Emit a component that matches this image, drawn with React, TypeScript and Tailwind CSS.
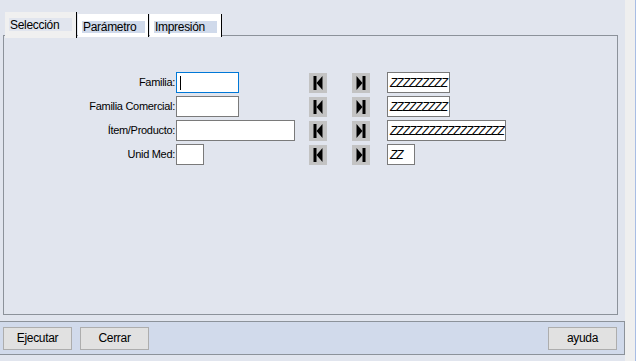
import React from "react";

const font = { fontFamily: '"Liberation Sans", Arial, sans-serif' };

function NavBtn({ dir }: { dir: "first" | "last" }) {
  return (
    <div className="w-[18px] h-[20px] bg-[#c3c3c3] flex items-center justify-center">
      <svg width="10" height="14" viewBox="0 0 10 14">
        {dir === "first" ? (
          <>
            <rect x="0.5" y="0" width="3" height="14" fill="#000" />
            <polygon points="9.5,0 3.5,7 9.5,14" fill="#000" />
          </>
        ) : (
          <>
            <rect x="6.5" y="0" width="3" height="14" fill="#000" />
            <polygon points="0.5,0 6.5,7 0.5,14" fill="#000" />
          </>
        )}
      </svg>
    </div>
  );
}

function Hatch({ width, count }: { width: number; count: number }) {
  return (
    <div
      className="h-[21px] border border-[#7a7a7a] bg-white flex items-center pl-[2px] overflow-hidden"
      style={{ width }}
    >
      <span className="text-[12px] italic leading-none text-black tracking-[-1px] whitespace-nowrap">
        {"Z".repeat(count)}
      </span>
    </div>
  );
}

const rows = [
  { label: "Familia:", w: 63, box: 63, z: 9, focus: true },
  { label: "Familia Comercial:", w: 63, box: 63, z: 9 },
  { label: "Ítem/Producto:", w: 119, box: 119, z: 18 },
  { label: "Unid Med:", w: 28, box: 28, z: 2 },
];

export default function App() {
  return (
    <div className="w-[636px] h-[361px] bg-[#e1e5ee] flex text-[11px] tracking-[-0.3px] text-black overflow-hidden" style={font}>
      <div className="w-[625px] flex flex-col">
        <div className="pt-[12px] pl-[5px] flex items-start h-[38px] relative z-10">
          <div className="w-[72px] h-[26px] bg-[#f0f0f0] border-r border-black pl-[4px] pt-[6px]">
            <div className="w-[63px] h-[13px] bg-[#e1e5ee] flex items-center pl-[1px] leading-none text-[12px]">Selección</div>
          </div>
          <div className="ml-[1px] mt-[2px] w-[71px] h-[23px] bg-white border-r border-black pl-[4px] pt-[7px]">
            <div className="w-[63px] h-[12px] bg-[#d0daeb] flex items-center pl-[1px] leading-none text-[12px]">Parámetro</div>
          </div>
          <div className="ml-[1px] mt-[2px] w-[72px] h-[23px] bg-white border-r border-black pl-[4px] pt-[7px]">
            <div className="w-[63px] h-[12px] bg-[#d0daeb] flex items-center pl-[1px] leading-none text-[12px]">Impresión</div>
          </div>
        </div>
        <div className="ml-[3px] -mt-[3px] w-[615px] h-[280px] border border-[#8c929a] pt-[36px] flex flex-col gap-[3px]">
          {rows.map((r) => (
            <div key={r.label} className="grid grid-cols-[172px_133px_43px_35px_auto] items-center h-[21px]">
              <div className="text-right pr-[1px] leading-none">{r.label}</div>
              <div>
                <div
                  className={`h-[21px] bg-white border ${r.focus ? "border-[#0078d7]" : "border-[#7a7a7a]"} flex items-center pl-[3px]`}
                  style={{ width: r.w }}
                >
                  {r.focus && <div className="w-[1px] h-[14px] bg-black" />}
                </div>
              </div>
              <NavBtn dir="first" />
              <NavBtn dir="last" />
              <Hatch width={r.box} count={r.z} />
            </div>
          ))}
        </div>
        <div className="mt-[6px] w-[625px] h-[34px] bg-[#d1daeb] border-t border-b border-r border-[#8c929a] flex items-center px-[3px]">
          <button className="w-[69px] h-[23px] bg-[#e1e1e1] border border-[#adadad] text-[12px] leading-none">Ejecutar</button>
          <button className="ml-[8px] w-[69px] h-[23px] bg-[#e1e1e1] border border-[#adadad] text-[12px] leading-none">Cerrar</button>
          <button className="ml-auto mr-[4px] w-[69px] h-[23px] bg-[#e1e1e1] border border-[#adadad] text-[12px] leading-none">ayuda</button>
        </div>
      </div>
      <div className="w-[10px] bg-[#efefef]" />
      <div className="w-[1px] bg-[#a8bde4]" />
    </div>
  );
}
